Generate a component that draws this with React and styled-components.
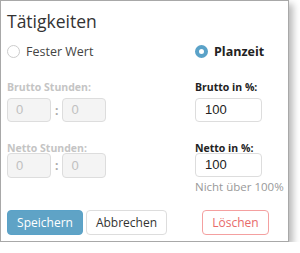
import React from "react";
import styled, { createGlobalStyle } from "styled-components";

const Global = createGlobalStyle`
  body {
    margin: 0;
    background: #fff;
    font-family: "Open Sans", "Noto Sans", Arial, sans-serif;
    color: #333;
  }
`;

const Panel = styled.div`
  box-sizing: border-box;
  width: 289px;
  height: 242px;
  border: 1px solid #a8a8a8;
  background: #fff;
  box-shadow: 4px 4px 7px rgba(0, 0, 0, 0.28);
  padding: 7px 6px 0 6px;
  display: flex;
  flex-direction: column;
`;

const Title = styled.h2`
  margin: 0;
  font-size: 17.5px;
  font-weight: 400;
  line-height: 26px;
  color: #333;
`;

const Columns = styled.div`
  display: grid;
  grid-template-columns: 188px 1fr;
  margin-top: 9px;
`;

const Column = styled.div`
  display: flex;
  flex-direction: column;
`;

const RadioRow = styled.label`
  display: flex;
  align-items: center;
  gap: 6px;
  height: 16px;
  font-size: 12.5px;
  font-weight: ${p => (p.checked ? 700 : 400)};
  color: ${p => (p.checked ? "#222" : "#444")};
`;

const Radio = styled.span`
  box-sizing: border-box;
  width: 13px;
  height: 13px;
  border-radius: 50%;
  border: ${p => (p.checked ? "4px solid #5aa2c8" : "1px solid #ccc")};
  background: #fff;
`;

const Field = styled.div`
  display: flex;
  flex-direction: column;
  margin-top: ${p => p.top}px;
`;

const Label = styled.div`
  font-size: 10.5px;
  font-weight: 700;
  line-height: ${p => p.lh}px;
  color: ${p => (p.disabled ? "#c4c4c4" : "#222")};
  margin-bottom: ${p => p.mb}px;
`;

const TimeRow = styled.div`
  display: flex;
  align-items: center;
  gap: 4px;
`;

const Colon = styled.span`
  font-size: 12px;
  font-weight: 700;
  color: #aaa;
`;

const Input = styled.div`
  box-sizing: border-box;
  width: ${p => p.w}px;
  height: ${p => p.h || 24}px;
  border: 1px solid #ddd;
  border-radius: 4px;
  background: ${p => (p.disabled ? "#f4f4f4" : "#fff")};
  color: ${p => (p.disabled ? "#c0c0c0" : "#222")};
  font-family: "Liberation Sans", Arial, sans-serif;
  font-size: 13px;
  line-height: ${p => (p.h || 24) - 2}px;
  padding-left: ${p => (p.disabled ? 8 : 9)}px;
`;

const Hint = styled.div`
  font-size: 11.5px;
  color: #999;
  margin-top: 2px;
  white-space: nowrap;
`;

const Buttons = styled.div`
  display: grid;
  grid-template-columns: auto auto 1fr;
  gap: 3px;
  margin-top: auto;
  margin-bottom: 6px;
`;

const Button = styled.button`
  box-sizing: border-box;
  width: ${p => p.w}px;
  height: 25px;
  padding: 0;
  border-radius: 4px;
  font-family: "Open Sans", "Noto Sans", Arial, sans-serif;
  font-size: 12px;
  border: 1px solid ${p => (p.variant === "primary" ? "#5aa2c8" : p.variant === "danger" ? "#f4a0a0" : "#ddd")};
  background: ${p => (p.variant === "primary" ? "#5fa3c6" : "#fff")};
  color: ${p => (p.variant === "primary" ? "#fff" : p.variant === "danger" ? "#e86a6a" : "#333")};
  justify-self: ${p => (p.variant === "danger" ? "end" : "start")};
  margin-right: ${p => (p.variant === "danger" ? 13 : 0)}px;
`;

export default function App() {
  return (
    <>
      <Global />
      <Panel>
        <Title>Tätigkeiten</Title>
        <Columns>
          <Column>
            <RadioRow>
              <Radio />
              Fester Wert
            </RadioRow>
            <Field top={21}>
              <Label disabled lh={14} mb={4}>Brutto Stunden:</Label>
              <TimeRow>
                <Input w={44} disabled>0</Input>
                <Colon>:</Colon>
                <Input w={44} disabled>0</Input>
              </TimeRow>
            </Field>
            <Field top={20}>
              <Label disabled lh={12} mb={-1}>Netto Stunden:</Label>
              <TimeRow>
                <Input w={44} h={25} disabled>0</Input>
                <Colon>:</Colon>
                <Input w={44} h={25} disabled>0</Input>
              </TimeRow>
            </Field>
          </Column>
          <Column>
            <RadioRow checked>
              <Radio checked />
              Planzeit
            </RadioRow>
            <Field top={21}>
              <Label lh={14} mb={4}>Brutto in %:</Label>
              <Input w={67}>100</Input>
            </Field>
            <Field top={20}>
              <Label lh={12} mb={-1}>Netto in %:</Label>
              <Input w={67}>100</Input>
              <Hint>Nicht über 100%</Hint>
            </Field>
          </Column>
        </Columns>
        <Buttons>
          <Button variant="primary" w={76}>Speichern</Button>
          <Button w={81}>Abbrechen</Button>
          <Button variant="danger" w={67}>Löschen</Button>
        </Buttons>
      </Panel>
    </>
  );
}
